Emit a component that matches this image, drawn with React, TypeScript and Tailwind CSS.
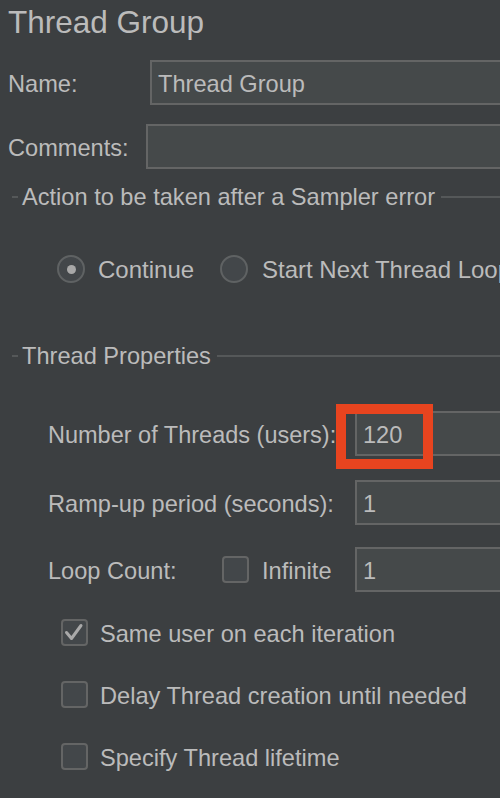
import React from "react";

const FONT = { fontFamily: '"Liberation Sans", Arial, Helvetica, sans-serif' };

function Field({ value, className = "" }: { value?: string; className?: string }) {
  return (
    <div
      className={`flex-1 h-[45px] -mr-[20px] border-2 border-[#646565] bg-[#45494a] pl-[6px] flex items-center text-[23.6px] leading-[24px] text-[#bbbbbb] ${className}`}
    >
      <span className="mt-[2px]">{value}</span>
    </div>
  );
}

function GroupHeader({ title }: { title: string }) {
  return (
    <div className="flex items-center ml-[4px] h-[24px] -mr-[20px]">
      <div className="w-[6px] h-[2px] bg-[#555859]" />
      <span className="ml-[4px] text-[23.6px] leading-[24px] whitespace-nowrap">{title}</span>
      <div className="ml-[6px] flex-1 h-[2px] bg-[#555859]" />
    </div>
  );
}

function Check({ checked }: { checked?: boolean }) {
  return (
    <div className="w-[27px] h-[27px] shrink-0 rounded-[4px] border-2 border-[#646565] bg-[#43474a] relative">
      {checked && (
        <svg width="27" height="27" viewBox="0 0 27 27" className="absolute -left-[2px] -top-[2px]">
          <path
            d="M5.5 13.5 L10.5 19.5 L20 6.5"
            fill="none"
            stroke="#a9a9a9"
            strokeWidth="3"
            strokeLinecap="round"
            strokeLinejoin="round"
          />
        </svg>
      )}
    </div>
  );
}

function Radio({ selected }: { selected?: boolean }) {
  return (
    <div className="w-[28px] h-[28px] shrink-0 rounded-full border-2 border-[#5f6263] bg-[#43474a] flex items-center justify-center">
      {selected && <div className="w-[9px] h-[9px] rounded-full bg-[#a8a8a8]" />}
    </div>
  );
}

export default function App() {
  return (
    <div
      style={FONT}
      className="relative w-[500px] h-[798px] overflow-hidden bg-[#3c3f41] text-[#bbbbbb] pl-[8px] flex flex-col"
    >
      {/* Title */}
      <div className="pt-[7px] text-[31.5px] leading-[31px] whitespace-nowrap">Thread Group</div>

      {/* Name */}
      <div className="mt-[22px] flex items-center h-[45px]">
        <div className="w-[142px] text-[23.6px] leading-[24px] shrink-0 mt-[2px]">Name:</div>
        <Field value="Thread Group" />
      </div>

      {/* Comments */}
      <div className="mt-[19px] flex items-center h-[45px]">
        <div className="w-[138px] text-[23.6px] leading-[24px] shrink-0 mt-[2px]">Comments:</div>
        <Field />
      </div>

      {/* Action group */}
      <div className="mt-[16px]">
        <GroupHeader title="Action to be taken after a Sampler error" />
      </div>

      <div className="mt-[46px] ml-[49px] flex items-center h-[28px] whitespace-nowrap text-[24px] leading-[24px]">
        <Radio selected />
        <span className="ml-[13px] w-[122px] shrink-0 mt-[2px]">Continue</span>
        <Radio />
        <span className="ml-[14px] mt-[2px]">Start Next Thread Loop</span>
      </div>

      {/* Thread Properties */}
      <div className="mt-[61px]">
        <GroupHeader title="Thread Properties" />
      </div>

      <div className="mt-[43px] ml-[40px] flex items-center h-[45px]">
        <div className="w-[307px] shrink-0 text-[23.5px] leading-[24px] whitespace-nowrap mt-[2px]">
          Number of Threads (users):
        </div>
        <Field value="120" />
      </div>

      <div className="mt-[24px] ml-[40px] flex items-center h-[45px]">
        <div className="w-[307px] shrink-0 text-[23.6px] leading-[24px] whitespace-nowrap mt-[2px]">
          Ramp-up period (seconds):
        </div>
        <Field value="1" />
      </div>

      <div className="mt-[22px] ml-[40px] flex items-center h-[45px]">
        <div className="w-[174px] shrink-0 text-[23.6px] leading-[24px] whitespace-nowrap mt-[2px]">Loop Count:</div>
        <Check />
        <div className="w-[106px] pl-[13px] shrink-0 text-[23.6px] leading-[24px] whitespace-nowrap mt-[2px]">Infinite</div>
        <Field value="1" />
      </div>

      <div className="mt-[27px] ml-[53px] flex items-center h-[27px] text-[23.6px] leading-[24px] whitespace-nowrap">
        <Check checked />
        <span className="ml-[12px] mt-[2px]">Same user on each iteration</span>
      </div>

      <div className="mt-[35px] ml-[53px] flex items-center h-[27px] text-[23.6px] leading-[24px] whitespace-nowrap">
        <Check />
        <span className="ml-[12px] mt-[2px]">Delay Thread creation until needed</span>
      </div>

      <div className="mt-[35px] ml-[53px] flex items-center h-[27px] text-[23.6px] leading-[24px] whitespace-nowrap">
        <Check />
        <span className="ml-[12px] mt-[2px]">Specify Thread lifetime</span>
      </div>

      {/* Red highlight annotation */}
      <div className="absolute left-[336px] top-[404px] w-[97px] h-[65px] border-[10px] border-[#e8441f]" />
    </div>
  );
}
